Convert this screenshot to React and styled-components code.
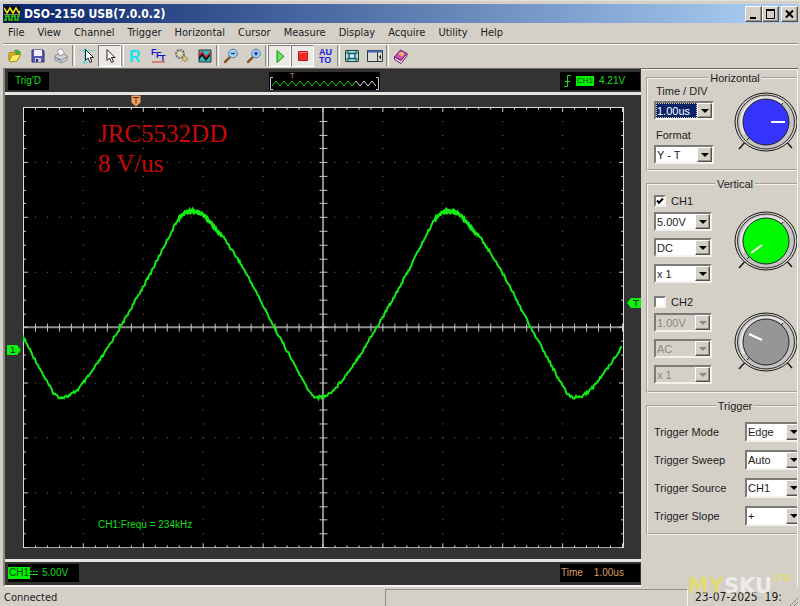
import React, { useState } from 'react'
import styled, { createGlobalStyle, css } from 'styled-components'

const GlobalStyle = createGlobalStyle`
  * {
    box-sizing: border-box;
  }
  body {
    margin: 0;
    background: #d4d0c8;
    color: #1c1c1c;
    font-family: "Liberation Sans", Arial, sans-serif;
    font-size: 11px;
    overflow: hidden;
  }
`

const tahoma = '"DejaVu Sans Condensed", Tahoma, "DejaVu Sans", sans-serif'

const raised = css`
  border: 1px solid;
  border-color: #fff #55534f #55534f #fff;
  box-shadow: inset -1px -1px 0 #96928a;
`

const sunken = css`
  border: 2px solid;
  border-color: #7c7a76 #f4f2ee #f4f2ee #7c7a76;
`

/* window */

const Window = styled.div`
  position: relative;
  display: flex;
  flex-direction: column;
  min-height: 100vh;
  padding: 3px 2px 0 3px;
  border-top: 1px solid #e4e1da;
  background: #d4d0c8;
`

const TitleBar = styled.header`
  display: flex;
  align-items: center;
  gap: 4px;
  height: 19px;
  padding: 0 0 0 1px;
  background: linear-gradient(90deg, #0a246a, #a6caf0 95%);
`

const Title = styled.h1`
  flex: 1;
  margin: 0;
  color: #fff;
  font: bold 12px/16px ${tahoma};
`

const WindowButtons = styled.div`
  display: flex;
`

const WindowButton = styled.button`
  ${raised}
  display: flex;
  width: 17px;
  height: 16px;
  padding: 1px;
  margin-left: ${({ $apart }) => ($apart ? '2px' : '0')};
  background: #d4d0c8;
`

const MenuBar = styled.nav`
  display: flex;
  gap: 13px;
  height: 21px;
  padding: 0 5px;
  border-bottom: 1px solid #8e8b85;
`

const MenuLink = styled.a`
  color: #1c1c1c;
  font: 11px/19px ${tahoma};
  text-decoration: none;
`

const ToolBar = styled.div`
  display: flex;
  height: 25px;
  border-top: 1px solid #fff;
  border-bottom: 1px solid #6b6965;
`

const ToolButton = styled.button`
  display: flex;
  align-items: center;
  justify-content: center;
  width: 23px;
  height: 22px;
  padding: 0;
  border: 1px solid transparent;
  background: none;
  ${({ $pressed }) => $pressed && css`
    border-color: #807d78 #fff #fff #807d78;
    background: #ebe9e5;
  `}
`

const Separator = styled.span`
  width: 3px;
  height: 21px;
  border-left: 1px solid #8e8b85;
  border-right: 1px solid #fff;
`

/* scope */

const Main = styled.main`
  display: flex;
  flex: 1;
`

const Scope = styled.section`
  flex: 1;
  min-width: 0;
  border-left: 2px solid #8a8782;
  border-bottom: 2px solid #f4f2ee;
  background: #333;
`

const Strip = styled.div`
  display: grid;
  grid-template-columns: 1fr auto 1fr;
  align-items: center;
  height: ${({ $bottom }) => ($bottom ? '22px' : '23px')};
  padding: 0 1px 0 3px;
`

const Readout = styled.div`
  display: flex;
  grid-column: ${({ $end }) => ($end ? 3 : 1)};
  justify-self: ${({ $end }) => ($end ? 'end' : 'start')};
  align-items: center;
  gap: ${({ $gap }) => $gap || 0}px;
  width: ${({ $width }) => $width}px;
  height: 18px;
  padding: 0 ${({ $pad }) => $pad || 0}px;
  background: #000;
  color: ${({ $amber }) => ($amber ? '#dc9f62' : '#18dc18')};
  font-size: 10px;
  line-height: 12px;
  white-space: nowrap;
`

const ChannelTag = styled.span`
  padding: 0 1px;
  background: #00f000;
  color: #06400a;
  font-size: ${({ $small }) => ($small ? '8px' : '10px')};
  line-height: ${({ $small }) => ($small ? '10px' : '12px')};
`

const Panel = styled.div`
  padding: 12px 17px 11px 18px;
  border-top: 3px solid #e6e4df;
  border-bottom: 3px solid #e6e4df;
`

const Screen = styled.div`
  position: relative;
  background: #000;
`

const Plot = styled.svg`
  display: block;
  width: 100%;
  height: auto;
`

const Marker = styled.svg`
  position: absolute;
  ${({ $side }) => ({
    top: 'left: 18%; bottom: 100%;',
    left: 'right: 100%; top: 54%; margin-right: 2px;',
    right: 'left: 100%; top: 43%; margin: 1px 0 0 3px;'
  }[$side])}
`

const Note = styled.p`
  position: absolute;
  left: 75px;
  top: 12px;
  margin: 0;
  color: #c40a0a;
  font: 25px/30px "Liberation Serif", "Times New Roman", serif;
`

const Measurement = styled.p`
  position: absolute;
  left: 75px;
  bottom: 17px;
  margin: 0;
  color: #18dc18;
  font-size: 10px;
  line-height: 12px;
`

/* side panel */

const Side = styled.aside`
  display: flex;
  flex-direction: column;
  gap: 7px;
  width: 157px;
  padding: 2px 0 0 5px;
  border-top: 1px solid #f4f2ee;
  border-right: 1px solid #f4f2ee;
  overflow: hidden;
`

const Group = styled.fieldset`
  display: block;
  width: 172px;
  margin: 0;
  padding: ${({ $top }) => $top || 0}px 0 ${({ $bottom }) => $bottom}px 6px;
  border: 2px groove #f4f2ee;
`

const Legend = styled.legend`
  margin: 0 auto;
  padding: 0 2px;
  font-size: 11px;
  line-height: 12px;
`

const Block = styled.div`
  display: grid;
  grid-template-columns: 80px 64px;
  margin-top: ${({ $next }) => ($next ? '13px' : '0')};
`

const Fields = styled.div`
  display: flex;
  flex-direction: column;
  align-items: flex-start;
  gap: ${({ $gap }) => $gap}px;
`

const FieldLabel = styled.label`
  display: block;
  padding: 0 0 3px 2px;
  line-height: 14px;
`

const CheckLabel = styled.label`
  display: flex;
  align-items: center;
  gap: 5px;
  height: 12px;
  margin-bottom: -2px;
  line-height: 12px;
`

const CheckBox = styled.input`
  ${sunken}
  appearance: none;
  width: 12px;
  height: 12px;
  margin: 0;
  background: #fff;
  &:checked {
    background: #fff url("data:image/svg+xml,%3Csvg xmlns='http://www.w3.org/2000/svg' viewBox='0 0 8 8'%3E%3Cpath d='M1 3.5l2 2.3L7 1.5' fill='none' stroke='%23000' stroke-width='2'/%3E%3C/svg%3E");
  }
`

const Combo = styled.span`
  ${sunken}
  display: grid;
  width: ${({ $width }) => $width}px;
  height: ${({ $tall }) => ($tall ? '20px' : '19px')};
  background: ${({ $disabled }) => ($disabled ? '#d4d0c8' : '#fff')};
`

const Select = styled.select`
  grid-area: 1 / 1;
  appearance: none;
  min-width: 0;
  margin: 0 15px 0 0;
  padding: 0 0 0 ${({ $active }) => ($active ? '0' : '1px')};
  border: ${({ $active }) => ($active ? '1px dotted #d8c890' : '0')};
  border-radius: 0;
  outline: none;
  background: ${({ $active }) => ($active ? '#0a246a' : 'transparent')};
  color: ${({ $active }) => ($active ? '#fff' : '#1c1c1c')};
  font: 11px "Liberation Sans", Arial, sans-serif;
  &:disabled {
    color: #8c8983;
    opacity: 1;
  }
`

const Arrow = styled.span`
  ${raised}
  grid-area: 1 / 1;
  justify-self: end;
  display: flex;
  align-items: center;
  justify-content: center;
  width: 15px;
  background: #d4d0c8;
  color: ${({ $disabled }) => ($disabled ? '#8c8983' : '#000')};
  pointer-events: none;
`

const KnobSlot = styled.div`
  padding-top: ${({ $top }) => $top}px;
`

const TriggerRow = styled.div`
  display: grid;
  grid-template-columns: 91px 58px;
  align-items: center;
  height: 20px;
  margin-bottom: ${({ $last }) => ($last ? '0' : '8px')};
`

/* status bar */

const StatusBar = styled.footer`
  display: grid;
  grid-template-columns: 382px 1fr 110px;
  height: 19px;
  font: 11px/21px ${tahoma};
`

const StatusText = styled.span`
  padding-left: 1px;
`

const StatusWell = styled.span`
  margin-top: 2px;
  border: 1px solid;
  border-color: #96928a #f4f2ee #f4f2ee #96928a;
`

const StatusDate = styled.span`
  display: flex;
  justify-content: space-between;
  align-items: flex-end;
  padding-left: 7px;
  font-size: 12px;
  white-space: pre;
`

const Watermark = styled.div`
  position: absolute;
  right: 9px;
  bottom: 8px;
  display: flex;
  align-items: flex-start;
  color: rgba(236, 226, 60, 0.6);
  font: bold 21px/24px "DejaVu Sans", sans-serif;
  pointer-events: none;
  span {
    color: rgba(255, 255, 255, 0.6);
  }
  small {
    font-size: 12px;
    line-height: 6px;
  }
`

/* icons */

const Svg = ({ children, size = 16, ...rest }) => (
  <svg width={size} height={size} viewBox="0 0 16 16" aria-hidden="true" {...rest}>{children}</svg>
)

const Pointer = ({ x = 0 }) => (
  <path d={`M${5 + x} 1.500v11l2.500-2.500 2 4.500 2-1-2-4h3.500z`} fill="#fff" stroke="#222" />
)

const Magnifier = ({ plus }) => (
  <Svg>
    <path d="M6.500 9.500L2 14" stroke="#8a5a28" strokeWidth="2.500" strokeLinecap="round" />
    <circle cx="10" cy="5.500" r="4.300" fill="#a9d4f8" stroke="#5078a8" />
    <path d="M8 5.500h4" stroke="#1c3c9c" strokeWidth="1.500" />
    {plus && <path d="M10 3.500v4" stroke="#1c3c9c" strokeWidth="1.500" />}
  </Svg>
)

const icons = {
  open: (
    <Svg>
      <path d="M2 5l3-1 2 1 5-1v3l-7 7-3-2z" fill="#e8b824" stroke="#9c7a10" />
      <path d="M2 13l3-6 9-1-4 7-6 1z" fill="#fbe866" stroke="#a88410" />
      <path d="M7 3c3-2 5-1 5 1h2l-3 3-3-3h2c0-1-1-1-3-1z" fill="#3cb838" stroke="#1c7c1c" strokeWidth="0.500" />
    </Svg>
  ),
  save: (
    <Svg>
      <path d="M2 2h11l1 1v11H2z" fill="#5858b4" stroke="#303078" />
      <path d="M4 2h8v6H4z" fill="#f0f0f8" />
      <path d="M5 10h6v4H5z" fill="#c8c8dc" />
      <path d="M6 11h2v3H6z" fill="#303078" />
    </Svg>
  ),
  print: (
    <Svg>
      <path d="M4 2l5-1 3 6-5 2z" fill="#fff" stroke="#a8a8a8" />
      <path d="M2 8l3-2 2 2 4-2 3 2v4l-6 3-6-3z" fill="#cfd3d8" stroke="#8a8c90" />
      <path d="M2 9l6 3 6-3M8 12v3" fill="none" stroke="#8a8c90" />
      <path d="M4 11l3 1" stroke="#4878c0" />
    </Svg>
  ),
  cross: (
    <Svg>
      <path d="M0 2.500h16" stroke="#38dce0" strokeDasharray="2 1" />
      <path d="M5.500 0v16M4 14.500h5" stroke="#38dce0" strokeDasharray="2 1" />
      <Pointer x={1.5} />
    </Svg>
  ),
  pointer: <Svg><Pointer /></Svg>,
  refresh: (
    <Svg>
      <text x="1" y="14" fill="#10e4f0" fontFamily="Liberation Sans" fontWeight="bold" fontSize="16">R</text>
    </Svg>
  ),
  fft: (
    <Svg>
      <g fill="#1414d8" fontFamily="Liberation Sans" fontWeight="bold" fontSize="9">
        <text x="0" y="7">F</text>
        <text x="5" y="10">F</text>
        <text x="9" y="13">T</text>
      </g>
      <path d="M1 14h13" stroke="#d83030" />
    </Svg>
  ),
  persist: (
    <Svg>
      <circle cx="6" cy="6" r="4" fill="none" stroke="#706c60" strokeWidth="2" strokeDasharray="2 1" />
      <circle cx="6" cy="6" r="1.500" fill="#e8e080" />
      <circle cx="11" cy="11" r="2.500" fill="#d4c47c" stroke="#807440" strokeDasharray="2 1" />
    </Svg>
  ),
  wave: (
    <Svg>
      <path d="M2 2h12v12H2z" fill="#30b8bc" stroke="#303030" />
      <path d="M2 9l3-5 4 5 4-4v3l-4 5-4-5-3 4z" fill="#101010" />
      <path d="M2 8l3-4 4 5 5-5" fill="none" stroke="#d82838" strokeWidth="1.500" />
    </Svg>
  ),
  zoomOut: <Magnifier />,
  zoomIn: <Magnifier plus />,
  play: (
    <Svg>
      <path d="M5 2.500l7 6-7 6z" fill="#68e068" stroke="#189018" />
    </Svg>
  ),
  stop: (
    <Svg>
      <path d="M3.500 3.500h9v9h-9z" fill="#f02828" stroke="#c01818" />
      <path d="M4 4.500h8" stroke="#ff8080" />
    </Svg>
  ),
  auto: (
    <Svg>
      <g fill="#1818e0" fontFamily="Liberation Sans" fontWeight="bold" fontSize="9">
        <text x="1" y="7">AU</text>
        <text x="1" y="15">TO</text>
      </g>
    </Svg>
  ),
  fit: (
    <Svg>
      <path d="M1.500 2.500h13v11h-13z" fill="#a8e4d0" stroke="#184848" />
      <path d="M5 5.500h6v5H5z" fill="#d8f4f8" stroke="#184880" strokeWidth="1.500" />
      <path d="M3 6V4h2M11 4h2v2M13 10v2h-2M5 12H3v-2" fill="none" stroke="#184848" />
    </Svg>
  ),
  panel: (
    <Svg>
      <path d="M.5 2.500h15v11H.5z" fill="#dcd9d2" stroke="#303848" />
      <path d="M1 3.500h14" stroke="#4468b8" strokeWidth="2" />
      <path d="M10.500 4v9" stroke="#303848" />
      <path d="M14 6.500v5l-2-2.500z" fill="#101010" />
    </Svg>
  ),
  book: (
    <Svg>
      <path d="M1.500 9v2.500l6.500 4 6-7.500V5.500l-6 7z" fill="#f0e4ec" stroke="#702068" />
      <path d="M1.500 9l6-7 6.500 3.500-6 7z" fill="#d050b8" stroke="#702068" />
      <path d="M6 6l3-1 1 1-2 2" fill="none" stroke="#fbe040" strokeWidth="1.500" />
    </Svg>
  )
}

const toolGroups = [
  ['open', 'save', 'print'],
  ['cross', 'pointer'],
  ['refresh', 'fft', 'persist', 'wave'],
  ['zoomOut', 'zoomIn'],
  ['play', 'stop', 'auto'],
  ['fit', 'panel'],
  ['book']
]
const pressed = ['pointer', 'play', 'stop']

const menus = ['File', 'View', 'Channel', 'Trigger', 'Horizontal', 'Cursor', 'Measure', 'Display', 'Acquire', 'Utility', 'Help']

/* graticule: 10 x 8 divisions, 60 x 55 units each */

const range = (n) => Array.from({ length: n }, (_, i) => i)

const tickPath = () => {
  let d = ''
  range(51).forEach((i) => {
    const x = i * 12 + 0.5
    const len = i % 5 ? 3 : 5
    d += `M${x} 0v${len}M${x} 442v-${len}M${x} 217v8`
  })
  range(33).forEach((i) => {
    const y = Math.round(i * 13.78) + 0.5
    const len = i % 4 ? 3 : 5
    d += `M0 ${y}h${len}M602 ${y}h-${len}M297 ${y}h8`
  })
  return d
}

const dotPath = () => {
  let d = ''
  range(51).forEach((i) => range(7).forEach((j) => {
    d += `M${i * 12} ${Math.round((j + 1) * 55.1) + 0.5}h1`
  }))
  range(9).forEach((i) => range(33).forEach((j) => {
    d += `M${(i + 1) * 60} ${Math.round(j * 13.78) + 0.5}h1`
  }))
  return d
}

// one period of the trace, from trough to trough
const PERIOD = 257
const shape = [
  [0, 291], [4, 290], [8, 289], [16, 283], [28, 268], [43, 246], [60, 218], [78, 186], [88, 168],
  [103, 138], [117, 111], [121, 107], [126, 104], [130, 103], [135, 104], [141, 107], [148, 114],
  [163, 132], [178, 155], [193, 182], [203, 202], [213, 221], [228, 249], [243, 277], [249, 287],
  [253, 290], [257, 291]
]

const level = (x) => {
  const t = (((x - 39) % PERIOD) + PERIOD) % PERIOD
  const i = shape.findIndex(([px]) => px > t)
  const [x0, y0] = shape[i - 1]
  const [x1, y1] = shape[i]
  return y0 + ((y1 - y0) * (t - x0)) / (x1 - x0)
}

const noise = (i) => {
  const s = Math.sin(i * 12.9898) * 43758.5453
  return s - Math.floor(s) - 0.5
}

const trace = range(601).map((x) => `${x},${(level(x) + noise(x) * 3).toFixed(1)}`).join(' ')
const crest = [[155, 200], [412, 457]].map(([from, to]) => (
  range(to - from).map((i) => `${from + i},${(level(from + i) + 1 + noise(i) * 3).toFixed(1)}`).join(' ')
))

const zigzag = (from, n) => range(n).map((i) => `${from + i * 4},${i % 2 ? 9 : 14}`).join(' ')

const Graticule = () => (
  <Plot viewBox="0 0 602 442" role="img" aria-label="Channel 1 trace">
    <path d={dotPath()} stroke="#77776c" />
    <path d="M0 220.500h602M300.500 0v442" stroke="#8c8c8c" strokeWidth="2" />
    <path d={tickPath()} stroke="#c8c8c8" />
    <path d="M.5 .5h601v441H.5z" fill="none" stroke="#e0e0e0" />
    <polyline points={trace} fill="none" stroke="#14ea14" strokeWidth="2" />
    {crest.map((points) => (
      <polyline key={points} points={points} fill="none" stroke="#14ea14" strokeWidth="3" />
    ))}
  </Plot>
)

const Knob = ({ color, hand }) => (
  <svg width="64" height="60" viewBox="0 0 64 60" aria-hidden="true">
    <path d="M13 48l-8 9M51 48l7 8" stroke="#1a1a1a" strokeWidth="1.500" />
    <ellipse cx="32" cy="30" rx="31" ry="29" fill="#d4d0c8" stroke="#1a1a1a" />
    <ellipse cx="32" cy="30" rx="28.500" ry="27" fill="#c4c4c4" stroke="#2a2a2a" />
    <path d="M10 42A26 25 0 0 1 49 11" fill="none" stroke="#e4e4e4" strokeWidth="3" />
    <path d="M13 48l6-6M49 11l-3 4" stroke="#1a1a1a" />
    <circle cx="32" cy="30" r="23" fill={color} stroke="#202020" />
    <path d={hand} stroke="#fff" strokeWidth="2" />
  </svg>
)

const ComboBox = ({ id, label, value, options = [], width = 58, active, disabled, tall }) => {
  const [current, setCurrent] = useState(value)
  return (
    <Combo $width={width} $disabled={disabled} $tall={tall}>
      <Select
        id={id}
        aria-label={label}
        value={current}
        disabled={disabled}
        $active={active}
        onChange={(e) => setCurrent(e.target.value)}
      >
        {[value, ...options].map((o) => <option key={o}>{o}</option>)}
      </Select>
      <Arrow $disabled={disabled}>
        <svg width="8" height="4" viewBox="0 0 8 4"><path d="M0 0h8L4 4z" fill="currentColor" /></svg>
      </Arrow>
    </Combo>
  )
}

const Channel = ({ name, on, volts, coupling, color, hand, next }) => {
  const [checked, setChecked] = useState(on)
  return (
    <Block $next={next}>
      <Fields $gap={7}>
        <CheckLabel>
          <CheckBox type="checkbox" checked={checked} onChange={() => setChecked(!checked)} />
          {name}
        </CheckLabel>
        <ComboBox label={`${name} volts`} value={volts} disabled={!checked} />
        <ComboBox label={`${name} coupling`} value={coupling} options={['GND']} disabled={!checked} />
        <ComboBox label={`${name} probe`} value="x 1" options={['x 10']} disabled={!checked} />
      </Fields>
      <KnobSlot $top={16}><Knob color={color} hand={hand} /></KnobSlot>
    </Block>
  )
}

const triggers = [
  ['Trigger Mode', 'Edge'],
  ['Trigger Sweep', 'Auto'],
  ['Trigger Source', 'CH1'],
  ['Trigger Slope', '+']
]

const App = () => {
  return (
    <Window>
      <GlobalStyle />
      <TitleBar>
        <svg width="16" height="16" viewBox="0 0 16 16" aria-hidden="true">
          <path d="M0 0h16v16H0z" fill="#101010" />
          <path d="M0 2l3 5 3-5 3 5 3-5 3 5 1-2" fill="none" stroke="#e8e020" strokeWidth="1.500" />
          <path d="M0 14h2v-4h3v4h3v-4h3v4h3v-4h2" fill="none" stroke="#20d820" strokeWidth="1.500" />
          <path d="M0 8.500h16" stroke="#888" />
        </svg>
        <Title>DSO-2150 USB(7.0.0.2)</Title>
        <WindowButtons>
          <WindowButton aria-label="Minimize">
            <svg width="13" height="12"><path d="M3 10h6" stroke="#000" strokeWidth="2" /></svg>
          </WindowButton>
          <WindowButton aria-label="Maximize">
            <svg width="13" height="12"><path d="M2.500 2v8.500h8V2M2 2h9" fill="none" stroke="#000" /><path d="M2 2h9" stroke="#000" strokeWidth="2" /></svg>
          </WindowButton>
          <WindowButton aria-label="Close" $apart>
            <svg width="13" height="12"><path d="M3 2.500l7 7M10 2.500l-7 7" stroke="#000" strokeWidth="2" /></svg>
          </WindowButton>
        </WindowButtons>
      </TitleBar>
      <MenuBar>
        {menus.map((m) => <MenuLink key={m} href="#">{m}</MenuLink>)}
      </MenuBar>
      <ToolBar>
        {toolGroups.map((group, i) => (
          <React.Fragment key={group[0]}>
            {i > 0 && <Separator />}
            {group.map((name) => (
              <ToolButton key={name} aria-label={name} $pressed={pressed.includes(name)}>
                {icons[name]}
              </ToolButton>
            ))}
          </React.Fragment>
        ))}
      </ToolBar>

      <Main>
        <Scope>
          <Strip>
            <Readout $width={41} $pad={7}>Trig'D</Readout>
            <svg width="111" height="18" viewBox="0 0 111 18" aria-hidden="true">
              <path d="M0 0h111v18H0z" fill="#000" />
              <text x="21" y="6" fill="#dc9f62" fontFamily="Liberation Sans" fontSize="7">T</text>
              <polyline points={zigzag(3, 22)} fill="none" stroke="#18c818" />
              <polyline points={`87,9 ${zigzag(91, 5)}`} fill="none" stroke="#d8d8d8" />
              <path d="M4 5.500H1.500v12H4M107 5.500h2.500v12H107" fill="none" stroke="#c8c8e8" />
            </svg>
            <Readout $width={80} $pad={4} $gap={5} $end>
              <svg width="7" height="12" viewBox="0 0 7 12" aria-hidden="true">
                <path d="M0 11.500h3.500V.5H7M1 6.500h5" fill="none" stroke="#18dc18" />
              </svg>
              <ChannelTag $small>CH1</ChannelTag>
              4.21V
            </Readout>
          </Strip>
          <Panel>
            <Screen>
              <Graticule />
              <Note>JRC5532DD<br />8 V/us</Note>
              <Measurement>CH1:Frequ = 234kHz</Measurement>
              <Marker $side="top" width="10" height="12" viewBox="0 0 10 12" aria-hidden="true">
                <path d="M.5 .5h9v7L5 11.500.5 7.500z" fill="#f0a060" />
                <path d="M2 2.500h6M5 2.500v6" stroke="#50300c" />
              </Marker>
              <Marker $side="left" width="14" height="10" viewBox="0 0 14 10" aria-hidden="true">
                <path d="M0 0h10l4 5-4 5H0z" fill="#10f010" />
                <path d="M4 2.500h2v5M4 7.500h4" fill="none" stroke="#063806" />
              </Marker>
              <Marker $side="right" width="14" height="10" viewBox="0 0 14 10" aria-hidden="true">
                <path d="M14 0H4L0 5l4 5h10z" fill="#10f010" />
                <path d="M6 2.500h6M9 2.500v6" stroke="#063806" />
              </Marker>
            </Screen>
          </Panel>
          <Strip $bottom>
            <Readout $width={71}>
              <ChannelTag>CH1</ChannelTag>
              <svg width="12" height="6" aria-hidden="true">
                <path d="M0 4.500h8" stroke="#18dc18" />
                <path d="M0 1.500h8" stroke="#18dc18" strokeDasharray="2 1" />
              </svg>
              5.00V
            </Readout>
            <Readout $width={80} $pad={1} $gap={11} $amber $end>
              <span>Time</span>
              <span>1.00us</span>
            </Readout>
          </Strip>
        </Scope>

        <Side>
          <Group $bottom={5}>
            <Legend>Horizontal</Legend>
            <Block>
              <Fields $gap={8}>
                <div>
                  <FieldLabel htmlFor="timebase">Time / DIV</FieldLabel>
                  <ComboBox id="timebase" value="1.00us" options={['2.00us', '4.00us']} width={60} active />
                </div>
                <div>
                  <FieldLabel htmlFor="format">Format</FieldLabel>
                  <ComboBox id="format" value="Y - T" options={['X - Y']} width={60} />
                </div>
              </Fields>
              <KnobSlot $top={8}><Knob color="#3434fa" hand="M37 30h14" /></KnobSlot>
            </Block>
          </Group>

          <Group $top={5} $bottom={7}>
            <Legend>Vertical</Legend>
            <Channel name="CH1" on volts="5.00V" coupling="DC" color="#00fa00" hand="M28 34l-11 8" />
            <Channel name="CH2" volts="1.00V" coupling="AC" color="#969696" hand="M28 28l-13-6" next />
          </Group>

          <Group $top={10} $bottom={7}>
            <Legend>Trigger</Legend>
            {triggers.map(([label, value], i) => (
              <TriggerRow key={label} $last={i === triggers.length - 1}>
                <label htmlFor={label}>{label}</label>
                <ComboBox id={label} value={value} tall />
              </TriggerRow>
            ))}
          </Group>
        </Side>
      </Main>

      <StatusBar>
        <StatusText>Connected</StatusText>
        <StatusWell />
        <StatusDate>
          {'23-07-2025  19:'}
          <svg width="10" height="12" viewBox="0 0 10 12" aria-hidden="true">
            <path d="M0 12L10 2M4 12l6-6M8 12l2-2" stroke="#8a8782" />
          </svg>
        </StatusDate>
      </StatusBar>
      <Watermark>MY<span>SKU</span><small>.ru</small></Watermark>
    </Window>
  )
}

export default App
